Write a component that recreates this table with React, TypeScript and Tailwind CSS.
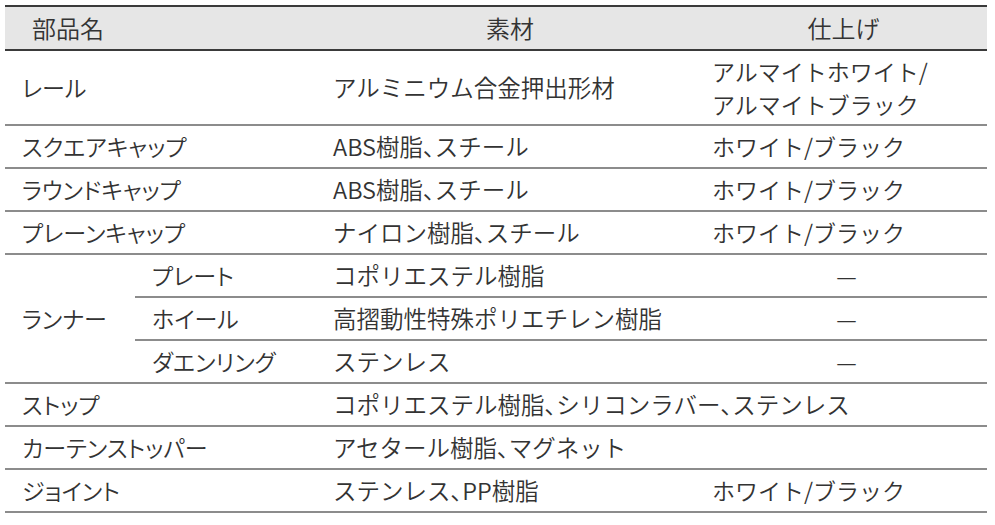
import React from "react";

const font = { fontFamily: '"Noto Sans CJK JP", "Noto Sans", sans-serif' };

const line = "border-b-2 border-[#8c8c8c]";
const nameCell = `${line} pl-[17px] text-[23px] [font-feature-settings:'palt']`;
const matCell = `${line} pl-[13px] text-[23.5px]`;
const finCell = `${line} pl-[12px] text-[23px]`;
const dashCell = `${line} text-center pl-[6px] text-[23px]`;

function M({ s }: { s: string }) {
  const parts = s.split("、");
  return (
    <>
      {parts.map((p, i) => (
        <React.Fragment key={i}>
          {p}
          {i < parts.length - 1 && <span className="[font-feature-settings:'palt']">、</span>}
        </React.Fragment>
      ))}
    </>
  );
}

export default function App() {
  return (
    <div className="w-[995px] h-[525px] bg-white pt-[5px] pl-[5px]" style={font}>
      <table className="border-collapse table-fixed w-[982px] font-[350] text-[#333] leading-none">
        <colgroup>
          <col className="w-[130px]" />
          <col className="w-[185px]" />
          <col className="w-[380px]" />
          <col className="w-[287px]" />
        </colgroup>
        <thead>
          <tr className="h-[44px] bg-[#e6e6e6] text-[24px]">
            <th colSpan={2} className="border-t-2 border-b-2 border-[#3a3a3a] text-left font-[350] pl-[27px]">部品名</th>
            <th className="border-t-2 border-b-2 border-[#3a3a3a] text-center font-[350]">素材</th>
            <th className="border-t-2 border-b-2 border-[#3a3a3a] text-center font-[350]">仕上げ</th>
          </tr>
        </thead>
        <tbody>
          <tr className="h-[75px]">
            <td colSpan={2} className={nameCell}>レール</td>
            <td className={matCell}>アルミニウム合金押出形材</td>
            <td className={`${finCell} leading-[33px]`}>
              アルマイトホワイト/
              <br />
              アルマイトブラック
            </td>
          </tr>
          {[
            ["スクエアキャップ", "ABS樹脂、スチール", "ホワイト/ブラック"],
            ["ラウンドキャップ", "ABS樹脂、スチール", "ホワイト/ブラック"],
            ["プレーンキャップ", "ナイロン樹脂、スチール", "ホワイト/ブラック"],
          ].map(([a, b, c]) => (
            <tr key={a} className="h-[43px]">
              <td colSpan={2} className={nameCell}>{a}</td>
              <td className={matCell}><M s={b} /></td>
              <td className={finCell}>{c}</td>
            </tr>
          ))}
          <tr className="h-[43px]">
            <td rowSpan={3} className={nameCell}>ランナー</td>
            <td className={nameCell}>プレート</td>
            <td className={matCell}>コポリエステル樹脂</td>
            <td className={dashCell}>—</td>
          </tr>
          <tr className="h-[43px]">
            <td className={nameCell}>ホイール</td>
            <td className={matCell}>高摺動性特殊ポリエチレン樹脂</td>
            <td className={dashCell}>—</td>
          </tr>
          <tr className="h-[43px]">
            <td className={nameCell}>ダエンリング</td>
            <td className={matCell}>ステンレス</td>
            <td className={dashCell}>—</td>
          </tr>
          <tr className="h-[43px]">
            <td colSpan={2} className={nameCell}>ストップ</td>
            <td colSpan={2} className={matCell}><M s="コポリエステル樹脂、シリコンラバー、ステンレス" /></td>
          </tr>
          <tr className="h-[43px]">
            <td colSpan={2} className={nameCell}>カーテンストッパー</td>
            <td className={matCell}><M s="アセタール樹脂、マグネット" /></td>
            <td className={line}></td>
          </tr>
          <tr className="h-[43px]">
            <td colSpan={2} className={nameCell}>ジョイント</td>
            <td className={matCell}><M s="ステンレス、PP樹脂" /></td>
            <td className={finCell}>ホワイト/ブラック</td>
          </tr>
        </tbody>
      </table>
    </div>
  );
}
